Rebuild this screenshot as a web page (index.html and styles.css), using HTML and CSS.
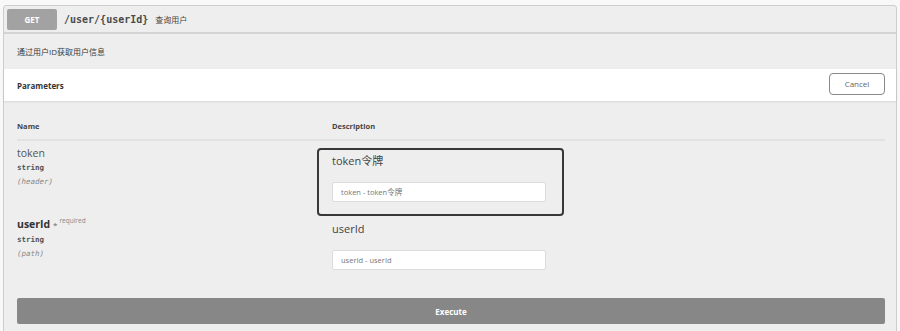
FILE: index.html
```html
<!DOCTYPE html>
<html lang="zh-CN">
<head>
    <meta charset="UTF-8">
    <meta name="viewport" content="width=device-width, initial-scale=1.0">
    <title>GET /user/{userId}</title>
    <link rel="stylesheet" href="styles.css">
</head>
<body>
<div class="opblock">
    <div class="opblock-summary">
        <span class="method">GET</span>
        <span class="path">/user/{userId}</span>
        <span class="summary-text">查询用户</span>
    </div>

    <div class="opblock-desc">
        <p>通过用户ID获取用户信息</p>
    </div>

    <div class="section-header">
        <h4>Parameters</h4>
        <button class="btn-cancel">Cancel</button>
    </div>

    <div class="params">
        <div class="params-head">
            <div class="col-name">Name</div>
            <div class="col-desc">Description</div>
        </div>

        <div class="param-row">
            <div class="col-name">
                <div class="param-name">token</div>
                <div class="param-type">string</div>
                <div class="param-in">(header)</div>
            </div>
            <div class="col-desc">
                <div class="desc-box highlight">
                    <p class="desc-title">token令牌</p>
                    <input type="text" placeholder="token - token令牌">
                </div>
            </div>
        </div>

        <div class="param-row">
            <div class="col-name">
                <div class="param-name required">userId <span class="req">* <sup>required</sup></span></div>
                <div class="param-type">string</div>
                <div class="param-in">(path)</div>
            </div>
            <div class="col-desc">
                <div class="desc-box">
                    <p class="desc-title">userId</p>
                    <input type="text" placeholder="userId - userId">
                </div>
            </div>
        </div>

        <button class="btn-execute">Execute</button>
    </div>
</div>
</body>
</html>
```

FILE: styles.css
```css
* {
    margin: 0;
    padding: 0;
    box-sizing: border-box;
}

body {
    background-color: #f8f8f8;
    font-family: "Open Sans", "Noto Sans CJK SC", sans-serif;
    color: #3b3b3b;
}

.opblock {
    margin: 5px 3px 0 3px;
    border: 1px solid #cdcdcd;
    border-radius: 3px;
    background-color: #eeeeee;
    height: 340px;
}

/* summary bar */
.opblock-summary {
    display: flex;
    align-items: center;
    height: 28px;
    padding: 0 3px;
    border-bottom: 2px solid #d4d4d4;
}

.method {
    display: flex;
    align-items: center;
    justify-content: center;
    width: 50px;
    height: 21px;
    background-color: #a2a2a2;
    color: #fff;
    font-size: 8px;
    font-weight: 700;
    border-radius: 2px;
}

.path {
    margin-left: 7px;
    font-family: "DejaVu Sans Mono", monospace;
    font-size: 10px;
    font-weight: 700;
    color: #4a4a4a;
}

.summary-text {
    margin-left: 7px;
    font-size: 8px;
    color: #444;
}

.opblock-desc {
    height: 35px;
    display: flex;
    align-items: center;
    padding: 0 13px;
    font-size: 8px;
    color: #3b3b3b;
}

/* parameters header */
.section-header {
    display: flex;
    align-items: center;
    justify-content: space-between;
    height: 32px;
    padding: 0 11px 0 13px;
    background-color: #fff;
    box-shadow: 0 1px 2px rgba(0, 0, 0, 0.1);
}

.section-header h4 {
    font-size: 8px;
    font-weight: 700;
    color: #333;
}

.btn-cancel {
    width: 56px;
    height: 22px;
    margin-top: -3px;
    background-color: #fff;
    border: 1.5px solid #888;
    border-radius: 4px;
    font-family: "Open Sans", sans-serif;
    font-size: 8px;
    color: #666;
}

/* table */
.params {
    padding: 19px 11px 0 13px;
}

.params-head {
    display: flex;
    padding-bottom: 7px;
    border-bottom: 2px solid #e2e2e2;
    font-size: 7.5px;
    font-weight: 700;
    line-height: 12px;
    color: #444;
}

.col-name {
    width: 315px;
    flex-shrink: 0;
}

.col-desc {
    flex: 1;
}

.param-row {
    display: flex;
    height: 68px;
}

.params-head + .param-row {
    margin-top: 5px;
}

.param-name {
    font-size: 10.5px;
    line-height: 14px;
    color: #555;
}

.param-name.required {
    font-weight: 700;
    color: #333;
}

.req {
    font-size: 8px;
    font-weight: 400;
    color: #666;
}

.req sup {
    font-size: 6.5px;
    color: #888;
    vertical-align: 5px;
}

.param-type {
    margin-top: 2px;
    font-family: "DejaVu Sans Mono", monospace;
    font-size: 7.5px;
    font-weight: 700;
    line-height: 12px;
    color: #555;
}

.param-in {
    margin-top: 2px;
    font-family: "DejaVu Sans Mono", monospace;
    font-size: 7.5px;
    font-style: italic;
    line-height: 12px;
    color: #888;
}

.param-row .col-desc {
    padding-top: 2px;
}

.desc-box {
    display: inline-flex;
    flex-direction: column;
    margin-left: -13px;
    padding: 4px 16px 12px 13px;
    border-radius: 2px;
}

.desc-box.highlight {
    outline: 2px solid #383838;
}

.desc-title {
    font-size: 11px;
    line-height: 14px;
    color: #444;
}

.desc-box input {
    margin-top: 14px;
    width: 214px;
    height: 20px;
    padding: 0 8px;
    background-color: #fff;
    border: 1px solid #dcdcdc;
    border-radius: 2px;
    font-family: "Open Sans", "Noto Sans CJK SC", sans-serif;
    font-size: 7.5px;
}

.desc-box input::placeholder {
    color: #777;
}

.btn-execute {
    display: block;
    width: 100%;
    height: 26px;
    margin-top: 16px;
    background-color: #878787;
    border: none;
    border-radius: 2px;
    color: #fff;
    font-family: "Open Sans", sans-serif;
    font-size: 8px;
    font-weight: 700;
}
```
